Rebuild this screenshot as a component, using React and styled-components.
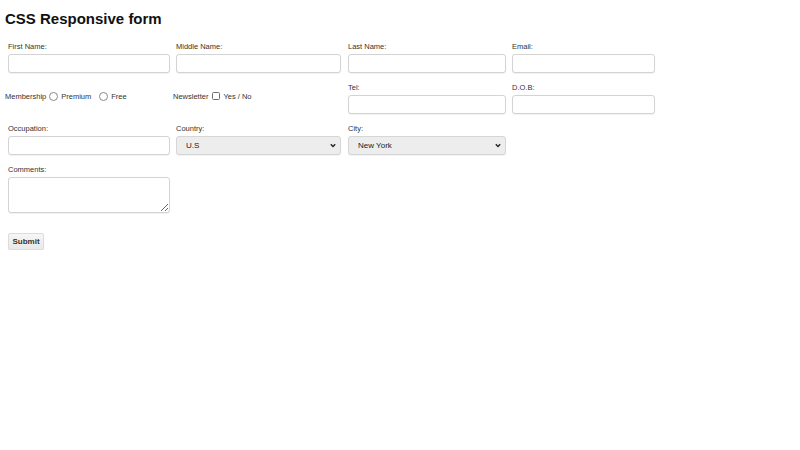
import React from "react";
import styled, { createGlobalStyle } from "styled-components";

const Global = createGlobalStyle`
  html, body { margin: 0; padding: 0; background: #fff; }
  body { font-family: "Liberation Sans", Arial, sans-serif; color: #333; }
`;

const Page = styled.div`
  padding: 10px 5px 0 5px;
`;

const Title = styled.h1`
  margin: 0 0 14px 0;
  font-size: 15px;
  line-height: 17px;
  font-weight: bold;
  color: #111;
`;

const Form = styled.form`
  display: grid;
  grid-template-columns: 168px 172px 164px 150px;
  row-gap: 9px;
  align-items: start;
`;

const Field = styled.div`
  display: flex;
  flex-direction: column;
  gap: 3px;
  padding-left: 3px;
  grid-column: ${(p) => p.col || "auto"};
`;

const Label = styled.label`
  display: block;
  margin-top: 1px;
  font-size: 7.5px;
  line-height: 9px;
  color: #333;
`;

const TextInput = styled.input`
  box-sizing: border-box;
  width: ${(p) => p.w}px;
  height: 19px;
  margin: 0;
  border: 1px solid #d3d3d3;
  border-radius: 3px;
  box-shadow: 0 1px 1px rgba(0, 0, 0, 0.06);
  background: #fff;
  font-family: inherit;
  font-size: 8px;
  padding: 0 4px;
  outline: none;
`;

const SelectWrap = styled.div`
  position: relative;
  width: ${(p) => p.w}px;
  height: 19px;
`;

const Select = styled.select`
  display: block;
  appearance: none;
  box-sizing: border-box;
  width: 100%;
  height: 19px;
  margin: 0;
  border: 1px solid #d6d6d6;
  border-radius: 3px;
  background-color: #ededed;
  box-shadow: 0 1px 1px rgba(0, 0, 0, 0.06);
  font-family: inherit;
  font-size: 8px;
  color: #222;
  padding: 0 0 0 9px;
  outline: none;
`;

const Chevron = styled.svg`
  position: absolute;
  right: 5px;
  top: 7px;
  width: 6px;
  height: 5px;
  pointer-events: none;
`;

const TextArea = styled.textarea`
  display: block;
  box-sizing: border-box;
  width: ${(p) => p.w}px;
  height: 36px;
  margin: 0;
  border: 1px solid #d3d3d3;
  border-radius: 3px;
  box-shadow: 0 1px 1px rgba(0, 0, 0, 0.06);
  font-family: inherit;
  font-size: 8px;
  resize: both;
  outline: none;
`;

const Choice = styled.div`
  display: flex;
  align-items: center;
  height: 28px;
  font-size: 7.5px;
  color: #333;
`;

const Radio = styled.input.attrs({ type: "radio" })`
  appearance: none;
  box-sizing: border-box;
  width: 9px;
  height: 9px;
  margin: 0 3px 0 3px;
  border: 1px solid #8a8a8a;
  border-radius: 50%;
  background: #fff;
`;

const Check = styled.input.attrs({ type: "checkbox" })`
  appearance: none;
  box-sizing: border-box;
  width: 8px;
  height: 8px;
  margin: 0 3px 0 4px;
  border: 1px solid #6f6f6f;
  border-radius: 1.5px;
  background: #fff;
`;

const Spacer = styled.span`
  display: inline-block;
  width: ${(p) => p.w}px;
`;

const SubmitRow = styled.div`
  grid-column: 1 / -1;
  padding-left: 3px;
  margin-top: 8px;
`;

const Button = styled.button`
  box-sizing: border-box;
  width: 36px;
  height: 17px;
  padding: 0;
  border: 1px solid #dcdcdc;
  border-radius: 2px;
  background: linear-gradient(#f6f6f6, #e9e9e9);
  box-shadow: 0 1px 1px rgba(0, 0, 0, 0.08);
  font-family: inherit;
  font-size: 8px;
  font-weight: bold;
  color: #333;
`;

function Dropdown({ w, value, children }) {
  return (
    <SelectWrap w={w}>
      <Select defaultValue={value}>{children}</Select>
      <Chevron viewBox="0 0 6 5">
        <path d="M0.8 1.2 L3 3.4 L5.2 1.2" fill="none" stroke="#222" strokeWidth="1.4" />
      </Chevron>
    </SelectWrap>
  );
}

export default function App() {
  return (
    <Page>
      <Global />
      <Title>CSS Responsive form</Title>
      <Form onSubmit={(e) => e.preventDefault()}>
        <Field>
          <Label>First Name:</Label>
          <TextInput w={162} />
        </Field>
        <Field>
          <Label>Middle Name:</Label>
          <TextInput w={165} />
        </Field>
        <Field>
          <Label>Last Name:</Label>
          <TextInput w={158} />
        </Field>
        <Field>
          <Label>Email:</Label>
          <TextInput w={143} />
        </Field>

        <Choice>
          Membership
          <Radio name="m" />
          Premium
          <Spacer w={5} />
          <Radio name="m" />
          Free
        </Choice>
        <Choice>
          Newsletter
          <Check />
          Yes / No
        </Choice>
        <Field>
          <Label>Tel:</Label>
          <TextInput w={158} />
        </Field>
        <Field>
          <Label>D.O.B:</Label>
          <TextInput w={143} />
        </Field>

        <Field>
          <Label>Occupation:</Label>
          <TextInput w={162} />
        </Field>
        <Field>
          <Label>Country:</Label>
          <Dropdown w={165} value="us">
            <option value="us">U.S</option>
          </Dropdown>
        </Field>
        <Field>
          <Label>City:</Label>
          <Dropdown w={158} value="ny">
            <option value="ny">New York</option>
          </Dropdown>
        </Field>
        <span />

        <Field col="1">
          <Label>Comments:</Label>
          <TextArea w={162} />
        </Field>

        <SubmitRow>
          <Button type="submit">Submit</Button>
        </SubmitRow>
      </Form>
    </Page>
  );
}
